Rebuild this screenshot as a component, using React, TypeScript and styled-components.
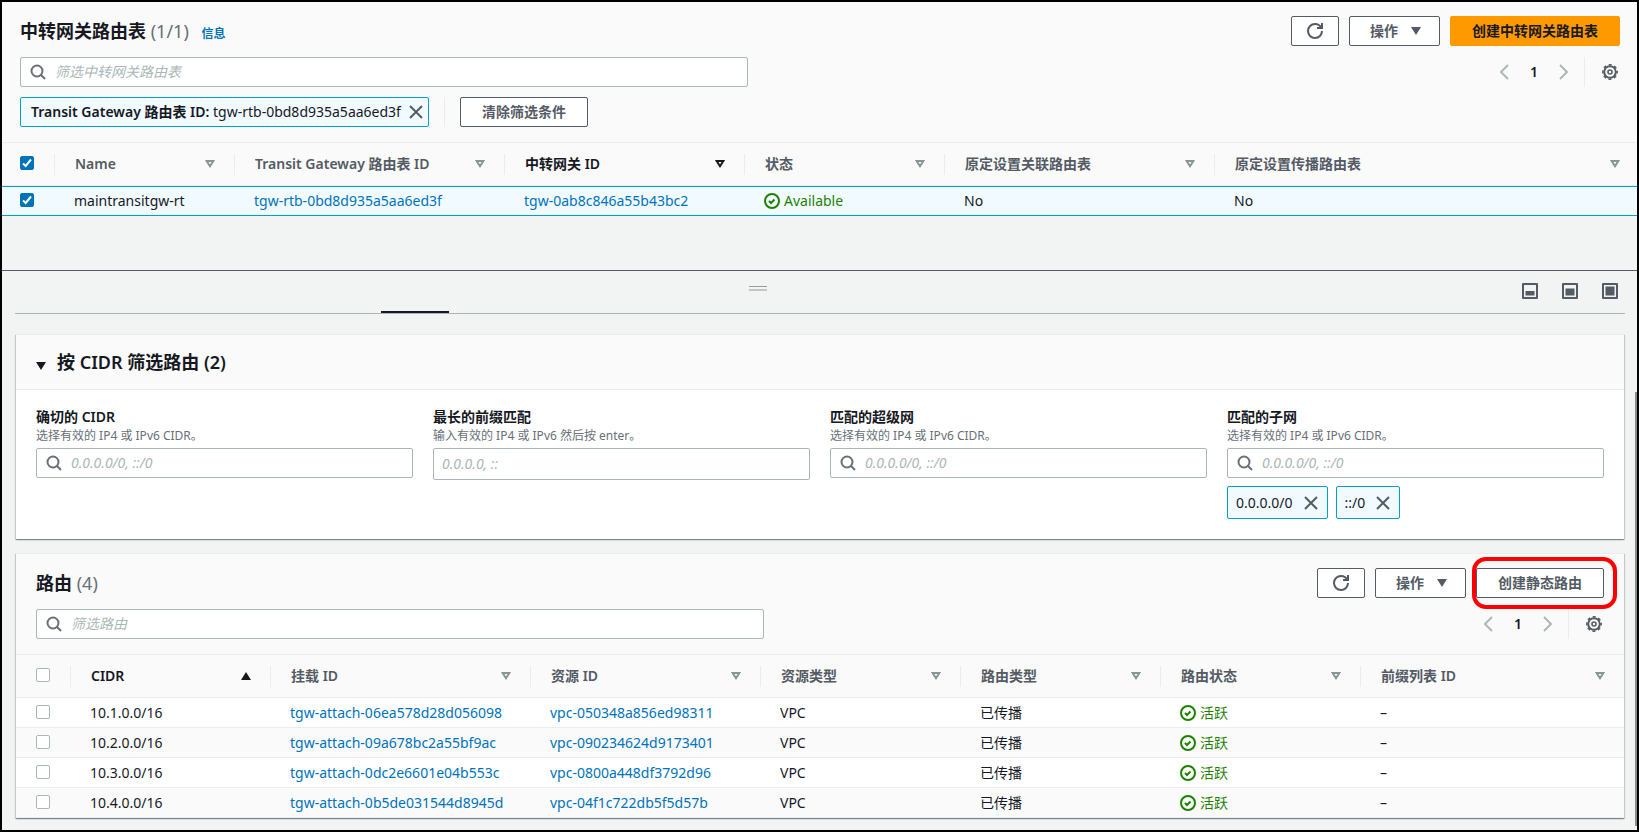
import React from 'react';
import styled, { createGlobalStyle, css } from 'styled-components';

const c = {
  ink: '#16191f',
  grey: '#545b64',
  muted: '#687078',
  placeholder: '#aab7b8',
  line: '#eaeded',
  panel: '#fafafa',
  canvas: '#f2f3f3',
  link: '#0073bb',
  accent: '#00a1c9',
  tint: '#f1faff',
  green: '#1d8102',
  orange: '#ff9900',
};

const Global = createGlobalStyle`
  *, *::before, *::after { box-sizing: border-box; }
  body {
    margin: 0;
    background: ${c.canvas};
    color: ${c.ink};
    font: 14px/22px "Noto Sans", "Noto Sans CJK SC", sans-serif;
  }
  button, input { font: inherit; color: inherit; }
  b { font-weight: 600; }
`;

/* ---------- icons ---------- */

const Icon = styled.svg.attrs({ viewBox: '0 0 16 16', 'aria-hidden': true })`
  display: block;
  flex: none;
  width: 16px;
  height: 16px;
  fill: none;
  stroke: currentColor;
  stroke-width: 2;
`;

const SearchIcon = () => (
  <Icon>
    <circle cx="7" cy="7" r="5.5" />
    <path d="M15 15l-4.2-4.2" />
  </Icon>
);
const CloseIcon = () => (
  <Icon>
    <path d="M2 2l12 12M14 2L2 14" />
  </Icon>
);
const RefreshIcon = () => (
  <Icon>
    <path d="M10 5h5V0" />
    <path d="M15 8a6.957 6.957 0 0 1-7 7 6.957 6.957 0 0 1-7-7 6.957 6.957 0 0 1 7-7 6.87 6.87 0 0 1 6.3 4" />
  </Icon>
);
const AngleIcon = ({ right }: { right?: boolean }) => (
  <Icon>
    <path d={right ? 'M4 1l7 7-7 7' : 'M12 1L5 8l7 7'} />
  </Icon>
);
const GearIcon = () => (
  <Icon>
    <circle cx="8" cy="8" r="5.8" />
    <circle cx="8" cy="8" r="7.2" strokeWidth="1.6" strokeDasharray="3 2.655" strokeDashoffset="1.5" />
    <circle cx="8" cy="8" r="2" strokeWidth="1.6" />
  </Icon>
);
const CheckCircleIcon = () => (
  <Icon>
    <circle cx="8" cy="8" r="7" />
    <path d="M5 8l2 2 3.5-3.5" />
  </Icon>
);
const PanelIcon = ({ fill }: { fill: number }) => (
  <Icon>
    <rect x="1" y="1" width="14" height="14" strokeLinejoin="round" />
    <rect x="3.5" y={12.5 - fill} width="9" height={fill} fill="currentColor" stroke="none" />
  </Icon>
);

const Glyph = styled.svg.attrs({ viewBox: '0 0 10 8', 'aria-hidden': true })<{ $active?: boolean }>`
  display: block;
  flex: none;
  width: 10px;
  height: 8px;
  color: ${(p) => (p.$active ? c.ink : '#879596')};
`;
const SortIcon = ({ state }: { state?: 'on' | 'asc' }) => (
  <Glyph $active={!!state}>
    {state === 'asc' ? (
      <path d="M0 8L5 0l5 8z" fill="currentColor" />
    ) : (
      <path d="M1.7 1h6.6L5 6.200z" fill="none" stroke="currentColor" strokeWidth="2" />
    )}
  </Glyph>
);
const Caret = styled.svg.attrs({ viewBox: '0 0 10 8', 'aria-hidden': true })`
  display: block;
  width: 10px;
  height: 8px;
  fill: currentColor;
`;
const CaretDown = () => (
  <Caret>
    <path d="M0 0h10L5 8z" />
  </Caret>
);

/* ---------- frame ---------- */

const Frame = styled.div`
  position: relative;
  min-height: 100vh;
  border: 2px solid #000;
`;

const ScrollThumb = styled.div`
  position: absolute;
  top: 390px;
  bottom: 4px;
  right: 0;
  width: 2px;
  background: #8a8c8c;
`;

const TopPanel = styled.section`
  background: ${c.panel};
`;

const Head = styled.div<{ $card?: boolean }>`
  display: flex;
  flex-direction: column;
  gap: 10px;
  padding: ${(p) => (p.$card ? '14px 20px 15px' : '14px 17px 15px 18px')};
`;

const Row = styled.div`
  display: flex;
  align-items: center;
  justify-content: space-between;
  height: 30px;
`;
const TitleRow = styled(Row)`
  margin-bottom: 1px;
`;

const Title = styled.h2`
  margin: 0;
  font-size: 18px;
  font-weight: 600;
  line-height: 30px;
`;
const Count = styled.span`
  color: ${c.muted};
  font-weight: 400;
`;
const InfoLink = styled.a`
  margin-left: 8px;
  color: ${c.link};
  font-size: 12px;
  line-height: 16px;
  text-decoration: none;
`;

const Actions = styled.div`
  display: flex;
  gap: 10px;
`;

const buttonPadding = { text: '0 21px', icon: '0 15px', menu: '0 18px 0 20px' };

const Button = styled.button<{ $primary?: boolean; $kind?: keyof typeof buttonPadding }>`
  display: flex;
  align-items: center;
  gap: 13px;
  height: 30px;
  padding: ${(p) => buttonPadding[p.$kind ?? 'text']};
  border: 1px solid ${(p) => (p.$primary ? c.orange : c.grey)};
  border-radius: 2px;
  background: ${(p) => (p.$primary ? c.orange : '#fff')};
  color: ${(p) => (p.$primary ? c.ink : c.grey)};
  font-weight: 600;
  white-space: nowrap;
  cursor: pointer;
`;

const Highlight = styled.div`
  position: relative;
  &::after {
    content: '';
    position: absolute;
    inset: -11px -13px -11px -4px;
    border: 4px solid #f00;
    border-radius: 14px;
    pointer-events: none;
  }
`;

const Pager = styled.nav`
  display: flex;
  align-items: center;
  height: 30px;
  padding-right: 2px;
`;
const PlainButton = styled.button<{ $dim?: boolean }>`
  padding: 0;
  border: 0;
  background: none;
  color: ${(p) => (p.$dim ? c.placeholder : c.grey)};
`;
const PageNumber = styled.span`
  width: 44px;
  font-weight: 600;
  text-align: center;
`;
const Rule = styled.span`
  width: 1px;
  height: 30px;
  margin: 0 15px;
  background: ${c.line};
  ${Pager} & { margin: 0 17px 0 12px; }
`;

/* ---------- inputs and tokens ---------- */

const SearchBox = styled.label<{ $tall?: boolean; $wide?: boolean }>`
  display: flex;
  align-items: center;
  gap: 9px;
  width: 100%;
  max-width: ${(p) => (p.$wide ? '728px' : 'none')};
  height: ${(p) => (p.$tall ? 32 : 30)}px;
  padding: 0 ${(p) => (p.$tall ? 8 : 9)}px;
  border: 1px solid ${c.placeholder};
  border-radius: 2px;
  background: #fff;
  color: ${c.muted};
`;
const SearchInput = styled.input`
  flex: 1;
  min-width: 0;
  padding: 0;
  border: 0;
  outline: 0;
  background: none;
  color: ${c.ink};
  &::placeholder {
    color: ${c.placeholder};
    font-style: italic;
    opacity: 1;
  }
`;

const Tokens = styled.div`
  display: flex;
  align-items: center;
`;
const Token = styled.span<{ $small?: boolean }>`
  display: flex;
  align-items: center;
  gap: ${(p) => (p.$small ? 10 : 7)}px;
  height: ${(p) => (p.$small ? 33 : 30)}px;
  padding: ${(p) => (p.$small ? '0 8px' : '0 4px 0 10px')};
  border: 1px solid ${c.accent};
  border-radius: 2px;
  background: ${c.tint};
  white-space: nowrap;
`;

/* ---------- tables ---------- */

const Table = styled.table`
  width: 100%;
  table-layout: fixed;
  border-collapse: separate;
  border-spacing: 0;
`;
const Th = styled.th`
  padding: 11px 0 10px;
  border: solid ${c.line};
  border-width: 1px 0;
  background: ${c.panel};
  text-align: left;
`;
const ThInner = styled.div<{ $left: number; $right: number; $last?: boolean }>`
  display: flex;
  align-items: center;
  height: 21px;
  padding: 0 ${(p) => p.$right}px 0 ${(p) => p.$left}px;
  border-right: ${(p) => (p.$last ? 0 : 1)}px solid ${c.line};
`;
const SortButton = styled.button<{ $active?: boolean }>`
  display: flex;
  flex: 1;
  align-items: center;
  align-self: flex-start;
  justify-content: space-between;
  padding: 0;
  border: 0;
  background: none;
  color: ${(p) => (p.$active ? c.ink : c.grey)};
  font-weight: 600;
  line-height: 20px;
  white-space: nowrap;
`;
const Td = styled.td<{ $left?: number }>`
  height: 30px;
  padding: 0 0 0 ${(p) => p.$left ?? 19}px;
  border-bottom: 1px solid ${c.line};
  line-height: 22px;
  white-space: nowrap;
`;
const Tr = styled.tr<{ $selected?: boolean }>`
  background: #fff;
  &:nth-child(even) { background: ${c.panel}; }
  ${(p) =>
    p.$selected &&
    css`
      background: ${c.tint};
      ${Td} {
        border-top: 1px solid ${c.accent};
        border-bottom-color: ${c.accent};
      }
    `}
`;
const Link = styled.a`
  color: ${c.link};
  text-decoration: none;
`;
const Status = styled.span`
  display: flex;
  align-items: center;
  gap: 4px;
  color: ${c.green};
`;
const Check = styled.input.attrs({ type: 'checkbox' })`
  appearance: none;
  display: block;
  width: 14px;
  height: 14px;
  margin: 0;
  border: 1px solid ${c.placeholder};
  border-radius: 2px;
  background: #fff;
  &:checked {
    border-color: ${c.link};
    background: ${c.link};
  }
`;
const CheckWrap = styled.span`
  display: grid;
  width: 14px;
  margin-bottom: 2px;
  > * { grid-area: 1 / 1; }
  ${ThInner} & { margin-bottom: 4px; }
`;
const Tick = styled.svg.attrs({ viewBox: '0 0 14 14', 'aria-hidden': true })`
  width: 14px;
  height: 14px;
  fill: none;
  stroke: #fff;
  stroke-width: 2;
  pointer-events: none;
`;

function Checkbox({ checked, label }: { checked?: boolean; label: string }) {
  return (
    <CheckWrap>
      <Check defaultChecked={checked} aria-label={label} />
      {checked && (
        <Tick>
          <path d="M3 7.5L5.700 10 11 3.500" />
        </Tick>
      )}
    </CheckWrap>
  );
}

type Column = { label: string; width?: number; state?: 'on' | 'asc' };

function TableHead({ columns, edge, first, checked }: { columns: Column[]; edge: number; first: number; checked?: boolean }) {
  return (
    <>
      <colgroup>
        <col width={first} />
        {columns.map((col) => (
          <col key={col.label} width={col.width} />
        ))}
      </colgroup>
      <thead>
        <tr>
          <Th>
            <ThInner $left={edge} $right={0}>
              <Checkbox checked={checked} label="全选" />
            </ThInner>
          </Th>
          {columns.map((col, i) => {
            const last = i === columns.length - 1;
            return (
              <Th key={col.label}>
                <ThInner $left={20} $right={last ? edge - 1 : 19} $last={last}>
                  <SortButton $active={!!col.state}>
                    {col.label}
                    <SortIcon state={col.state} />
                  </SortButton>
                </ThInner>
              </Th>
            );
          })}
        </tr>
      </thead>
    </>
  );
}

function Paging() {
  return (
    <Pager aria-label="分页">
      <PlainButton $dim aria-label="上一页"><AngleIcon /></PlainButton>
      <PageNumber>1</PageNumber>
      <PlainButton $dim aria-label="下一页"><AngleIcon right /></PlainButton>
      <Rule />
      <PlainButton aria-label="首选项"><GearIcon /></PlainButton>
    </Pager>
  );
}

/* ---------- split panel ---------- */

const Split = styled.section`
  margin-top: 54px;
  border-top: 1px solid ${c.grey};
  padding-bottom: 12px;
`;
const SplitBar = styled.div`
  display: flex;
  padding: 12px 19px 0 0;
`;
const Handle = styled.div`
  display: flex;
  flex: 1;
  justify-content: center;
  padding-top: 3px;
  &::before {
    content: '';
    width: 18px;
    height: 5px;
    border: solid #999c9c;
    border-width: 1px 0 2px;
    border-bottom-color: #c4c6c6;
  }
`;
const SizeButtons = styled.div`
  display: flex;
  gap: 24px;
  padding-left: 9px;
`;
const Tabs = styled.div`
  margin: 12px 12px 20px 13px;
  border-bottom: 1px solid ${c.placeholder};
`;
const ActiveTab = styled.div`
  width: 68px;
  height: 2px;
  margin-left: 366px;
  background: ${c.ink};
`;
const Cards = styled.div`
  display: grid;
  gap: 14px;
  padding: 0 13px 0 14px;
`;
const Card = styled.section`
  border-top: 1px solid ${c.line};
  background: ${c.panel};
  box-shadow: 0 1px 1px 0 rgba(0, 28, 36, 0.3), 1px 1px 1px 0 rgba(0, 28, 36, 0.15), -1px 1px 1px 0 rgba(0, 28, 36, 0.15);
`;
const ExpandHeader = styled.button`
  display: flex;
  align-items: center;
  gap: 11px;
  width: 100%;
  height: 55px;
  padding: 0 20px;
  border: 0;
  border-bottom: 1px solid ${c.line};
  background: none;
  font-size: 18px;
  font-weight: 600;
  text-align: left;
  ${Caret} { margin-top: 8px; }
`;
const Fields = styled.div`
  display: grid;
  grid-template-columns: repeat(4, 1fr);
  gap: 20px;
  padding: 16px 20px 20px;
  background: #fff;
`;
const FieldLabel = styled.label`
  display: block;
  font-weight: 600;
`;
const Hint = styled.p`
  margin: 0 0 4px;
  color: ${c.muted};
  font-size: 12px;
  line-height: 16px;
`;
const FieldTokens = styled.div`
  display: flex;
  gap: 8px;
  margin-top: 8px;
`;

const cidrHint = '选择有效的 IP4 或 IPv6 CIDR。';
const fields = [
  { id: 'exact', label: '确切的 CIDR', hint: cidrHint, placeholder: '0.0.0.0/0, ::/0', icon: true, tokens: [] as string[] },
  { id: 'longest', label: '最长的前缀匹配', hint: '输入有效的 IP4 或 IPv6 然后按 enter。', placeholder: '0.0.0.0, ::', icon: false, tokens: [] },
  { id: 'supernet', label: '匹配的超级网', hint: cidrHint, placeholder: '0.0.0.0/0, ::/0', icon: true, tokens: [] },
  { id: 'subnet', label: '匹配的子网', hint: cidrHint, placeholder: '0.0.0.0/0, ::/0', icon: true, tokens: ['0.0.0.0/0', '::/0'] },
];

const gatewayColumns: Column[] = [
  { label: 'Name', width: 180 },
  { label: 'Transit Gateway 路由表 ID', width: 270 },
  { label: '中转网关 ID', width: 240, state: 'on' },
  { label: '状态', width: 200 },
  { label: '原定设置关联路由表', width: 270 },
  { label: '原定设置传播路由表' },
];

const routeColumns: Column[] = [
  { label: 'CIDR', width: 200, state: 'asc' },
  { label: '挂载 ID', width: 260 },
  { label: '资源 ID', width: 230 },
  { label: '资源类型', width: 200 },
  { label: '路由类型', width: 200 },
  { label: '路由状态', width: 200 },
  { label: '前缀列表 ID' },
];

const routes = [
  ['10.1.0.0/16', 'tgw-attach-06ea578d28d056098', 'vpc-050348a856ed98311'],
  ['10.2.0.0/16', 'tgw-attach-09a678bc2a55bf9ac', 'vpc-090234624d9173401'],
  ['10.3.0.0/16', 'tgw-attach-0dc2e6601e04b553c', 'vpc-0800a448df3792d96'],
  ['10.4.0.0/16', 'tgw-attach-0b5de031544d8945d', 'vpc-04f1c722db5f5d57b'],
];

export default function App() {
  return (
    <>
      <Global />
      <Frame>
        <TopPanel>
          <Head>
            <TitleRow>
              <Title>
                中转网关路由表 <Count>(1/1)</Count> <InfoLink href="#info"><b>信息</b></InfoLink>
              </Title>
              <Actions>
                <Button $kind="icon" aria-label="刷新"><RefreshIcon /></Button>
                <Button $kind="menu">操作 <CaretDown /></Button>
                <Button $primary>创建中转网关路由表</Button>
              </Actions>
            </TitleRow>
            <Row>
              <SearchBox $wide>
                <SearchIcon />
                <SearchInput placeholder="筛选中转网关路由表" aria-label="筛选中转网关路由表" />
              </SearchBox>
              <Paging />
            </Row>
            <Tokens>
              <Token>
                <span><b>Transit Gateway 路由表 ID:</b> tgw-rtb-0bd8d935a5aa6ed3f</span>
                <PlainButton aria-label="移除"><CloseIcon /></PlainButton>
              </Token>
              <Rule />
              <Button>清除筛选条件</Button>
            </Tokens>
          </Head>
          <Table>
            <TableHead columns={gatewayColumns} edge={18} first={53} checked />
            <tbody>
              <Tr $selected>
                <Td $left={18}><Checkbox checked label="选择 maintransitgw-rt" /></Td>
                <Td>maintransitgw-rt</Td>
                <Td><Link href="#rtb">tgw-rtb-0bd8d935a5aa6ed3f</Link></Td>
                <Td><Link href="#tgw">tgw-0ab8c846a55b43bc2</Link></Td>
                <Td><Status><CheckCircleIcon />Available</Status></Td>
                <Td>No</Td>
                <Td>No</Td>
              </Tr>
            </tbody>
          </Table>
        </TopPanel>

        <Split>
          <SplitBar>
            <Handle />
            <SizeButtons>
              <PlainButton aria-label="小面板"><PanelIcon fill={4.5} /></PlainButton>
              <PlainButton aria-label="中面板"><PanelIcon fill={7} /></PlainButton>
              <PlainButton aria-label="大面板"><PanelIcon fill={9} /></PlainButton>
            </SizeButtons>
          </SplitBar>
          <Tabs><ActiveTab /></Tabs>
          <Cards>
            <Card>
              <ExpandHeader aria-expanded="true"><CaretDown />按 CIDR 筛选路由 (2)</ExpandHeader>
              <Fields>
                {fields.map((f) => (
                  <div key={f.id}>
                    <FieldLabel htmlFor={f.id}>{f.label}</FieldLabel>
                    <Hint>{f.hint}</Hint>
                    <SearchBox as="div" $tall={!f.icon}>
                      {f.icon && <SearchIcon />}
                      <SearchInput id={f.id} placeholder={f.placeholder} />
                    </SearchBox>
                    {f.tokens.length > 0 && (
                      <FieldTokens>
                        {f.tokens.map((t) => (
                          <Token key={t} $small>
                            {t}
                            <PlainButton aria-label={`移除 ${t}`}><CloseIcon /></PlainButton>
                          </Token>
                        ))}
                      </FieldTokens>
                    )}
                  </div>
                ))}
              </Fields>
            </Card>

            <Card>
              <Head $card>
                <TitleRow>
                  <Title>路由 <Count>(4)</Count></Title>
                  <Actions>
                    <Button $kind="icon" aria-label="刷新"><RefreshIcon /></Button>
                    <Button $kind="menu">操作 <CaretDown /></Button>
                    <Highlight><Button>创建静态路由</Button></Highlight>
                  </Actions>
                </TitleRow>
                <Row>
                  <SearchBox $wide>
                    <SearchIcon />
                    <SearchInput placeholder="筛选路由" aria-label="筛选路由" />
                  </SearchBox>
                  <Paging />
                </Row>
              </Head>
              <Table>
                <TableHead columns={routeColumns} edge={20} first={55} />
                <tbody>
                  {routes.map(([cidr, attachment, resource]) => (
                    <Tr key={cidr}>
                      <Td $left={20}><Checkbox label={`选择 ${cidr}`} /></Td>
                      <Td>{cidr}</Td>
                      <Td><Link href={`#${attachment}`}>{attachment}</Link></Td>
                      <Td><Link href={`#${resource}`}>{resource}</Link></Td>
                      <Td>VPC</Td>
                      <Td>已传播</Td>
                      <Td><Status><CheckCircleIcon />活跃</Status></Td>
                      <Td>–</Td>
                    </Tr>
                  ))}
                </tbody>
              </Table>
            </Card>
          </Cards>
        </Split>
        <ScrollThumb />
      </Frame>
    </>
  );
}
